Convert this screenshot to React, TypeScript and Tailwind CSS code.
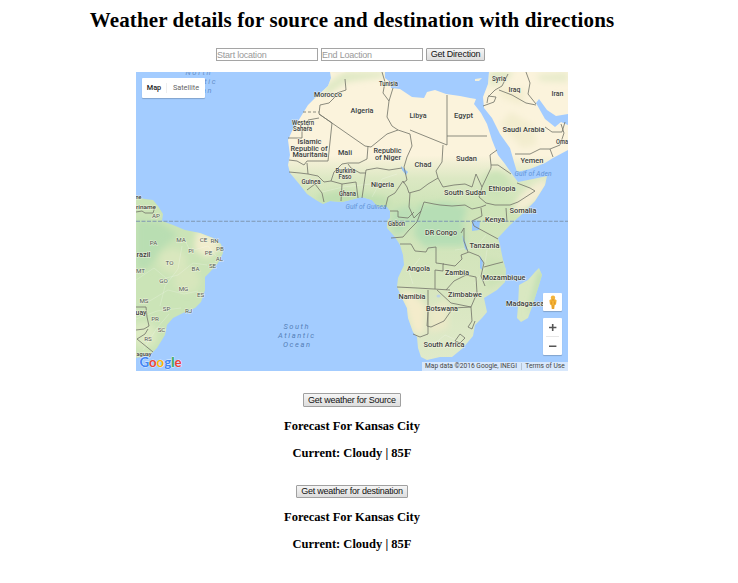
import React from "react";

type Label = { t: string; x: number; y: number; w: number; s?: number };

const countries: Label[] = [
  { t: "Morocco", x: 328, y: 97, w: 28 },
  { t: "Tunisia", x: 388.5, y: 86, w: 19, s: 6.3 },
  { t: "Algeria", x: 362, y: 113, w: 23 },
  { t: "Libya", x: 418, y: 117.5, w: 17 },
  { t: "Egypt", x: 463.5, y: 117.5, w: 19 },
  { t: "Syria", x: 499, y: 81, w: 14, s: 6.3 },
  { t: "Iraq", x: 514.5, y: 92, w: 12 },
  { t: "Iran", x: 557.5, y: 96, w: 12 },
  { t: "Saudi Arabia", x: 523.5, y: 132, w: 42 },
  { t: "Oma", x: 562, y: 143.5, w: 12, s: 6.3 },
  { t: "Yemen", x: 532, y: 163, w: 23 },
  { t: "Western", x: 303, y: 124.5, w: 22, s: 6.3 },
  { t: "Sahara", x: 302.5, y: 130.5, w: 19, s: 6.3 },
  { t: "Islamic", x: 309.5, y: 144, w: 24 },
  { t: "Republic of", x: 309, y: 150.5, w: 37 },
  { t: "Mauritania", x: 310, y: 157, w: 35 },
  { t: "Mali", x: 345, y: 155, w: 14 },
  { t: "Republic", x: 387.5, y: 153, w: 28 },
  { t: "of Niger", x: 388, y: 160, w: 26 },
  { t: "Chad", x: 423, y: 166.5, w: 17 },
  { t: "Sudan", x: 466.5, y: 161, w: 21 },
  { t: "Burkina", x: 345.5, y: 173, w: 20, s: 6.3 },
  { t: "Faso", x: 345, y: 179, w: 13, s: 6.3 },
  { t: "Guinea", x: 311, y: 183.5, w: 19, s: 6.3 },
  { t: "Ghana", x: 347.5, y: 195.5, w: 17, s: 6.3 },
  { t: "Nigeria", x: 382.5, y: 187, w: 23 },
  { t: "South Sudan", x: 465, y: 195, w: 42 },
  { t: "Ethiopia", x: 502, y: 191, w: 27 },
  { t: "Somalia", x: 523, y: 213, w: 27 },
  { t: "Kenya", x: 495, y: 221.5, w: 20 },
  { t: "Gabon", x: 396.5, y: 226, w: 17, s: 6.3 },
  { t: "DR Congo", x: 441, y: 234.5, w: 32 },
  { t: "Tanzania", x: 484.5, y: 248, w: 30 },
  { t: "Angola", x: 418.5, y: 271, w: 23 },
  { t: "Zambia", x: 457, y: 275, w: 24 },
  { t: "Mozambique", x: 504, y: 279.5, w: 43 },
  { t: "Namibia", x: 412, y: 298.5, w: 27 },
  { t: "Zimbabwe", x: 465, y: 297, w: 34 },
  { t: "Botswana", x: 442, y: 310.5, w: 32 },
  { t: "Madagascar", x: 526.5, y: 305.5, w: 41 },
  { t: "South Africa", x: 444, y: 347, w: 41 },
  { t: "ne", x: 138.5, y: 199, w: 6, s: 6 },
  { t: "riname", x: 146, y: 208.5, w: 20, s: 6 },
  { t: "razil", x: 143.5, y: 256.5, w: 14 },
  { t: "uay", x: 141, y: 314.5, w: 11 },
  { t: "aguay", x: 144, y: 355.5, w: 15, s: 6 },
];

const states: [string, number, number][] = [
  ["AP", 156, 218], ["PA", 153.5, 244.5], ["MA", 181, 242], ["CE", 203.5, 242],
  ["RN", 214.5, 243], ["PB", 220, 250.5], ["PI", 191, 252.5], ["PE", 208.5, 255],
  ["AL", 219.5, 261], ["SE", 212.5, 268], ["TO", 169.5, 264.5], ["BA", 195.5, 270.5],
  ["MT", 140.5, 272.5], ["GO", 163.5, 282.5], ["MG", 183.5, 291], ["ES", 200.5, 297],
  ["MS", 144, 302.5], ["SP", 166.5, 310.5], ["RJ", 188.5, 313], ["PR", 155, 320.5],
  ["SC", 161.5, 331.5], ["RS", 148, 341],
];

const africa =
  "M330 72 L331 78 328 86 315 98 308 105 300 118 292 131 288 140 290 155 288 165 290 173 300 185 307 194 316 200 323 204 330 201 342 202 362 197 372 200 378 207 387 207 390 211 390 218 387 221 387 228 395 237 400 245 403 255 404 265 398 278 397 287 402 298 407 308 408 318 413 332 417 337 418 348 421 357 427 360 440 357 452 357 463 348 473 336 475 325 482 318 487 312 484 298 497 290 505 282 506 270 503 260 500 245 498 238 510 225 520 216 535 201 545 185 547 176 533 179 518 182 512 174 505 164 498 155 492 140 487 124 481 113 474 104 476 99 470 98 460 96 446 94 435 90 427 92 424 98 412 97 400 89 391 88 390 82 385 78 385 72Z";
const asia =
  "M489 72 L488 84 483 97 484 108 492 118 500 134 510 148 514 162 517 172 530 169 545 163 553 158 568 150 568 125 561 122 555 127 545 119 536 103 539 99 547 110 556 116 568 114 568 72Z";
const brazil =
  "M136 197 L145 199 153 200 158 206 163 214 162 221 173 225 185 230 200 233 213 238 221 244 223 253 218 263 210 272 205 277 205 290 201 302 195 308 185 312 173 318 167 325 165 335 157 348 150 355 136 358Z";
const madagascar =
  "M539 268 L542 275 539 285 533 304 528 318 521 322 517 318 518 306 519 285 528 280 535 272Z";

const borders = [
  "M345 79 L346 90 337 93 334 98 329 103 320 105 319 114 M319 114 L365 146 371 147 387 134 398 130 410 134",
  "M382 72 L385 82 383 93 389 101 387 117 392 126 398 130 M389 101 L393 88",
  "M302 138 L302 130 308 128 308 120 319 118 M288 138 L302 138",
  "M319 114 L332 123 328 161 307 161 304 165 297 161 289 160",
  "M368 146 L367 159 359 163 348 163 342 164 334 172 331 181 324 182 318 176 308 174 307 163",
  "M410 134 L412 146 407 157 404 167 407 180 403 183 M366 170 L377 168 389 170 402 168 M366 170 L364 184 362 198",
  "M289 172 L300 173 308 174 M307 190 L315 184 322 193 324 202 M331 181 L342 184 356 182 358 198 M342 184 L341 201 M348 164 L351 168 360 173 366 173",
  "M410 130 L447 145 447 95 M447 136 L487 136 M443 145 L442 162 436 171 438 178 428 184 420 190 409 193 407 187 403 181",
  "M438 178 L443 187 454 185 465 184 472 187 476 174 482 187 491 168 491 165 498 165 511 174 M482 187 L479 197 486 203 495 205 510 205 518 202 535 191 530 188 517 183 M491 165 L490 155 497 150",
  "M403 181 L395 193 388 197 385 209 M410 193 L409 207 414 218 421 211 424 202 434 204 440 205 452 206 465 205 472 209 481 207 486 205",
  "M390 211 L398 211 398 217 408 218 414 212 M391 238 L403 237 409 230 417 222 421 211 M400 244 L411 244 415 251 426 252 428 248 436 247 436 263 444 264",
  "M397 287 L417 288 434 289 450 290 M435 289 L435 270 443 271 443 264 455 266 462 259 461 255 469 252 479 256 484 263 481 276 485 286",
  "M464 228 L464 241 468 252 M481 208 L482 216 472 221 474 226 498 239 M506 208 L507 222 M464 228 L461 233 M484 267 L495 264 503 262 M446 290 L454 281 466 275 476 277 477 293 471 307 451 303 437 290",
  "M428 290 L428 312 427 326 431 327 444 321 453 308 471 307 472 321 468 327 472 329 475 321 M413 334 L420 337 428 334 428 312 M455 341 L460 334 465 338 460 343Z",
  "M487 103 L488 97 495 90 502 86 508 74 M499 90 L512 95 526 103 536 105 M526 72 L530 83 528 94 536 104 M483 106 L494 102 496 97 488 96",
  "M515 154 L530 154 540 149 550 149 560 145 564 133 561 124 M550 149 L553 157 M545 127 L552 132 562 132 565 122",
  "M136 212 L142 211 145 213 153 213 155 207 M136 307 L146 307 147 317 149 326 144 329 136 330 M148 329 L145 334 137 339 153 352",
];

function MapCanvas() {
  return (
    <svg
      className="block h-full w-full"
      viewBox="136 72 432 299"
      fontFamily="Roboto, 'Liberation Sans', sans-serif"
    >
      <defs>
        <clipPath id="land">
          <path d={africa + asia + brazil + madagascar} />
        </clipPath>
        <linearGradient id="afr" x1="0" y1="72" x2="0" y2="360" gradientUnits="userSpaceOnUse">
          <stop offset="0" stopColor="#fbf3dc" />
          <stop offset=".29" stopColor="#fbf3dc" />
          <stop offset=".37" stopColor="#dce8c3" />
          <stop offset=".46" stopColor="#cee4b8" />
          <stop offset=".7" stopColor="#d5e5bd" />
          <stop offset="1" stopColor="#e0eaca" />
        </linearGradient>
        <filter id="soft" x="-30%" y="-30%" width="160%" height="160%">
          <feGaussianBlur stdDeviation="3" />
        </filter>
      </defs>
      <rect x="136" y="72" width="432" height="299" fill="#a3ccff" />
      <g fill="url(#afr)">
        <path d={africa} />
        <path d={asia} />
      </g>
      <path d={brazil} fill="#cbe4b7" />
      <path d={madagascar} fill="#d9e8c1" />
      <g clipPath="url(#land)">
        <g filter="url(#soft)">
          <path d="M418 205 L445 202 467 207 463 222 465 246 436 246 425 247 414 235Z" fill="#b6deb5" />
          <path d="M390 212 L409 205 416 216 405 233 393 236Z" fill="#bbdfb7" />
          <path d="M315 196 L340 190 387 197 390 207 330 208Z" fill="#c0dfb0" />
          <ellipse cx="496" cy="184" rx="14" ry="13" fill="#cbe3b7" />
          <ellipse cx="531" cy="196" rx="22" ry="8" fill="#f4edd3" transform="rotate(-42 531 196)" />
          <path d="M400 291 L412 292 426 306 424 334 414 333Z" fill="#f4eccb" />
          <path d="M429 310 L448 300 448 328 430 333Z" fill="#ece9c7" />
          <path d="M324 86 L344 72 385 72 383 77 347 82 323 98Z" fill="#dfe9c4" />
          <path d="M497 88 L526 89 522 105 502 98Z" fill="#f3edcf" />
          <path d="M511 112 L534 126 537 145 522 148 500 124Z" fill="#f3edcf" />
          <path d="M489 71 L513 71 508 79 490 87Z" fill="#dfe8c5" />
          <path d="M536 75 L568 72 568 82 541 81Z" fill="#e7ebca" />
          <path d="M197 229 L218 239 219 250 207 258 194 249Z" fill="#f1edcd" />
          <path d="M136 220 L160 222 178 235 161 249 147 270 136 268Z" fill="#b9deb2" />
          <ellipse cx="173" cy="261" rx="14" ry="12" fill="#d9e7be" />
          <ellipse cx="187" cy="280" rx="13" ry="13" fill="#d7e6bc" />
          <ellipse cx="144" cy="335" rx="13" ry="13" fill="#dceac2" />
          <path d="M540 268 L544 275 534 305 528 315Z" fill="#b8dcaf" />
          <path d="M486 258 L507 262 506 279 487 289Z" fill="#cce2b6" />
        </g>
        <g fill="none" stroke="#fff" strokeOpacity=".2" strokeWidth="1">
          <path d="M136 280 L154 268 166 278 178 275 193 263 207 265 M148 302 L168 290 184 294 198 291 M160 306 L165 286 178 269 182 246 M136 319 L157 311 181 308 M143 350 L157 328 169 314 M184 238 L190 251 208 246 216 256" />
          <path d="M322 192 L343 187 370 184 395 190 M372 197 L382 179 397 174 M486 235 L476 247 455 250 M487 250 L484 270 474 284 M428 349 L445 335 463 343 M420 258 L409 272 413 284" />
        </g>
      </g>
      <g fill="#f4f0da">
        <path d="M331 72 L338 74 346 72Z" />
        <path d="M475 79 L482 78 479 81 475 81Z" />
      </g>
      <g fill="#97c5fa">
        <path d="M472 220 L480 221 479 230 472 231Z" />
        <path d="M401 166 L408 172 406 175 402 170Z" />
        <path d="M462 235 L465 241 468 251 465 249Z" />
        <path d="M480 256 L483 261 482 270 480 268Z" />
        <ellipse cx="438.5" cy="296" rx="2" ry="1.5" fill="#bcd3e6" />
      </g>
      <g fill="none" stroke="#77796d" strokeWidth=".85" strokeLinejoin="round">
        {borders.map((d) => (
          <path key={d} d={d} />
        ))}
        <path d="M303 112 H319" strokeDasharray="3 2" />
      </g>
      <path d="M136 221.2 H568" stroke="#7f97b3" strokeWidth="1.1" strokeDasharray="4 1.5" />
      <g fill="#6490c9" fontStyle="italic" fontSize="7.5" textAnchor="middle">
        <text x="198" y="75" textLength="25">North</text>
        <text x="197.5" y="84" textLength="36">Atlantic</text>
        <text x="198" y="92.5" textLength="27">Ocean</text>
        <g fill="#557fb8">
          <text x="296" y="329" textLength="25">South</text>
          <text x="296" y="338" textLength="36">Atlantic</text>
          <text x="296.5" y="347" textLength="27">Ocean</text>
        </g>
        <g fontSize="6.6" fill="#5f93d6">
          <text x="366" y="209" textLength="41">Gulf of Guinea</text>
          <text x="533" y="175.5" textLength="37">Gulf of Aden</text>
        </g>
      </g>
      <g fill="#3c413c" stroke="#f8f6e9" strokeWidth="1.2" strokeOpacity=".7" paintOrder="stroke" textAnchor="middle">
        <g fontWeight="500">
          {countries.map((c) => (
            <text key={c.t + c.x} x={c.x} y={c.y} fontSize={c.s ?? 7.2} textLength={c.w} lengthAdjust="spacingAndGlyphs">
              {c.t}
            </text>
          ))}
        </g>
        <g fontSize="6.2" fill="#4f5852">
          {states.map(([t, x, y]) => (
            <text key={t} x={x} y={y}>{t}</text>
          ))}
        </g>
      </g>
      <g fontFamily="Lato, 'Open Sans', sans-serif" fontSize="13.5" fontWeight="700" stroke="#fff" strokeWidth=".8" strokeOpacity=".7" paintOrder="stroke">
        <text x="139.5" y="366.5" textLength="42" lengthAdjust="spacingAndGlyphs">
          <tspan fill="#4285f4">G</tspan>
          <tspan fill="#ea4335">o</tspan>
          <tspan fill="#fbb605">o</tspan>
          <tspan fill="#4285f4">g</tspan>
          <tspan fill="#34a853">l</tspan>
          <tspan fill="#ea4335">e</tspan>
        </text>
      </g>
    </svg>
  );
}

function GreyButton({ children, className }: { children: React.ReactNode; className: string }) {
  return (
    <button
      className={`flex items-center justify-center whitespace-nowrap rounded-[1px] border border-[#a0a0a0] bg-linear-to-b from-[#f5f5f5] to-[#dddddd] font-['Liberation_Sans',Arial,sans-serif] text-[9px] leading-none tracking-[-0.24px] text-[#111] ${className}`}
    >
      {children}
    </button>
  );
}

function Forecast({ button, className }: { button: string; className: string }) {
  return (
    <section className="flex h-[91px] flex-col items-center">
      <div className="flex h-[14px] items-end">
        <GreyButton className={className}>{button}</GreyButton>
      </div>
      <h3 className="mt-[11px] text-[12.5px] font-bold leading-[16px]">Forecast For Kansas City</h3>
      <h3 className="mt-[11px] text-[12.5px] font-bold leading-[16px]">Current: Cloudy | 85F</h3>
    </section>
  );
}

export default function App() {
  const input =
    "h-[13px] w-[102px] rounded-none border border-[#a5a5a5] bg-white font-['Liberation_Sans',Arial,sans-serif] text-[9px] leading-none tracking-[-0.22px] placeholder:text-[#999999]";
  return (
    <main className="flex h-[583px] w-[704px] flex-col items-center overflow-hidden bg-white font-['Liberation_Serif','Times_New_Roman',serif] text-black">
      <h1 className="mt-2 whitespace-nowrap text-[21px] font-bold leading-6 tracking-[0.13px]">
        Weather details for source and destination with directions
      </h1>
      <form className="mt-4 flex h-[13px] w-[272px] gap-[3px]">
        <input className={input} placeholder="Start location" />
        <input className={input} placeholder="End Loaction" />
        <GreyButton className="h-[13px] w-[59px]">Get Direction</GreyButton>
      </form>
      <div className="relative mt-[11px] h-[299px] w-[432px] shrink-0 overflow-hidden font-[Roboto,sans-serif]">
        <MapCanvas />
        <div className="absolute left-[6px] top-[6px] flex h-[20px] w-[63px] items-center rounded-[1px] bg-white text-[7.3px] shadow-[0_1px_1px_rgba(0,0,0,0.2)]">
          <span className="w-[25px] border-r border-[#eeeeee] text-center font-medium text-[#222]">Map</span>
          <span className="flex-1 text-center text-[#666]">Satellite</span>
        </div>
        <div className="absolute right-[6px] top-[221px] flex h-[18px] w-[19px] items-center justify-center rounded-[1px] bg-white shadow-[0_1px_1px_rgba(0,0,0,0.2)]">
          <svg className="h-[15px] w-[10px]" viewBox="0 0 10 15">
            <path d="M1.4 5.6 Q1.6 4 5 4 Q8.4 4 8.6 5.6 L8 9.4 L6.8 10 L6.2 14 H3.8 L3.2 10 L2 9.4Z" fill="#f5b333" />
            <circle cx="5" cy="2.8" r="2.2" fill="#f3b43c" />
            <path d="M3.5 4.9 H6.5 M3.3 6.5 V9.5 M6.7 6.5 V9.5 M5 10 V14" stroke="#ce8121" strokeWidth=".6" />
          </svg>
        </div>
        <div className="absolute right-[6px] top-[246px] flex h-[37px] w-[19px] flex-col items-center rounded-[1px] bg-white shadow-[0_1px_1px_rgba(0,0,0,0.2)]">
          <svg className="h-full w-full" viewBox="0 0 19 37">
            <path d="M6 9.5 H13.4 M9.7 6 V13 M6 28.2 H13.4" stroke="#555" strokeWidth="1.6" />
            <path d="M3 18.5 H16" stroke="#e6e6e6" />
          </svg>
        </div>
        <footer className="absolute bottom-0 right-0 flex h-[9px] w-[146px] items-center bg-[#e5effb]/80 text-[6.65px] leading-none text-[#444]">
          <span className="w-[100px] whitespace-nowrap border-r border-[#b5c4d4] pl-[3px]">Map data ©2016 Google, INEGI</span>
          <span className="flex-1 whitespace-nowrap text-center">Terms of Use</span>
        </footer>
      </div>
      <div className="mt-[22px]">
        <Forecast button="Get weather for Source" className="h-[14px] w-[98px]" />
        <Forecast button="Get weather for destination" className="h-[13px] w-[112px]" />
      </div>
    </main>
  );
}
